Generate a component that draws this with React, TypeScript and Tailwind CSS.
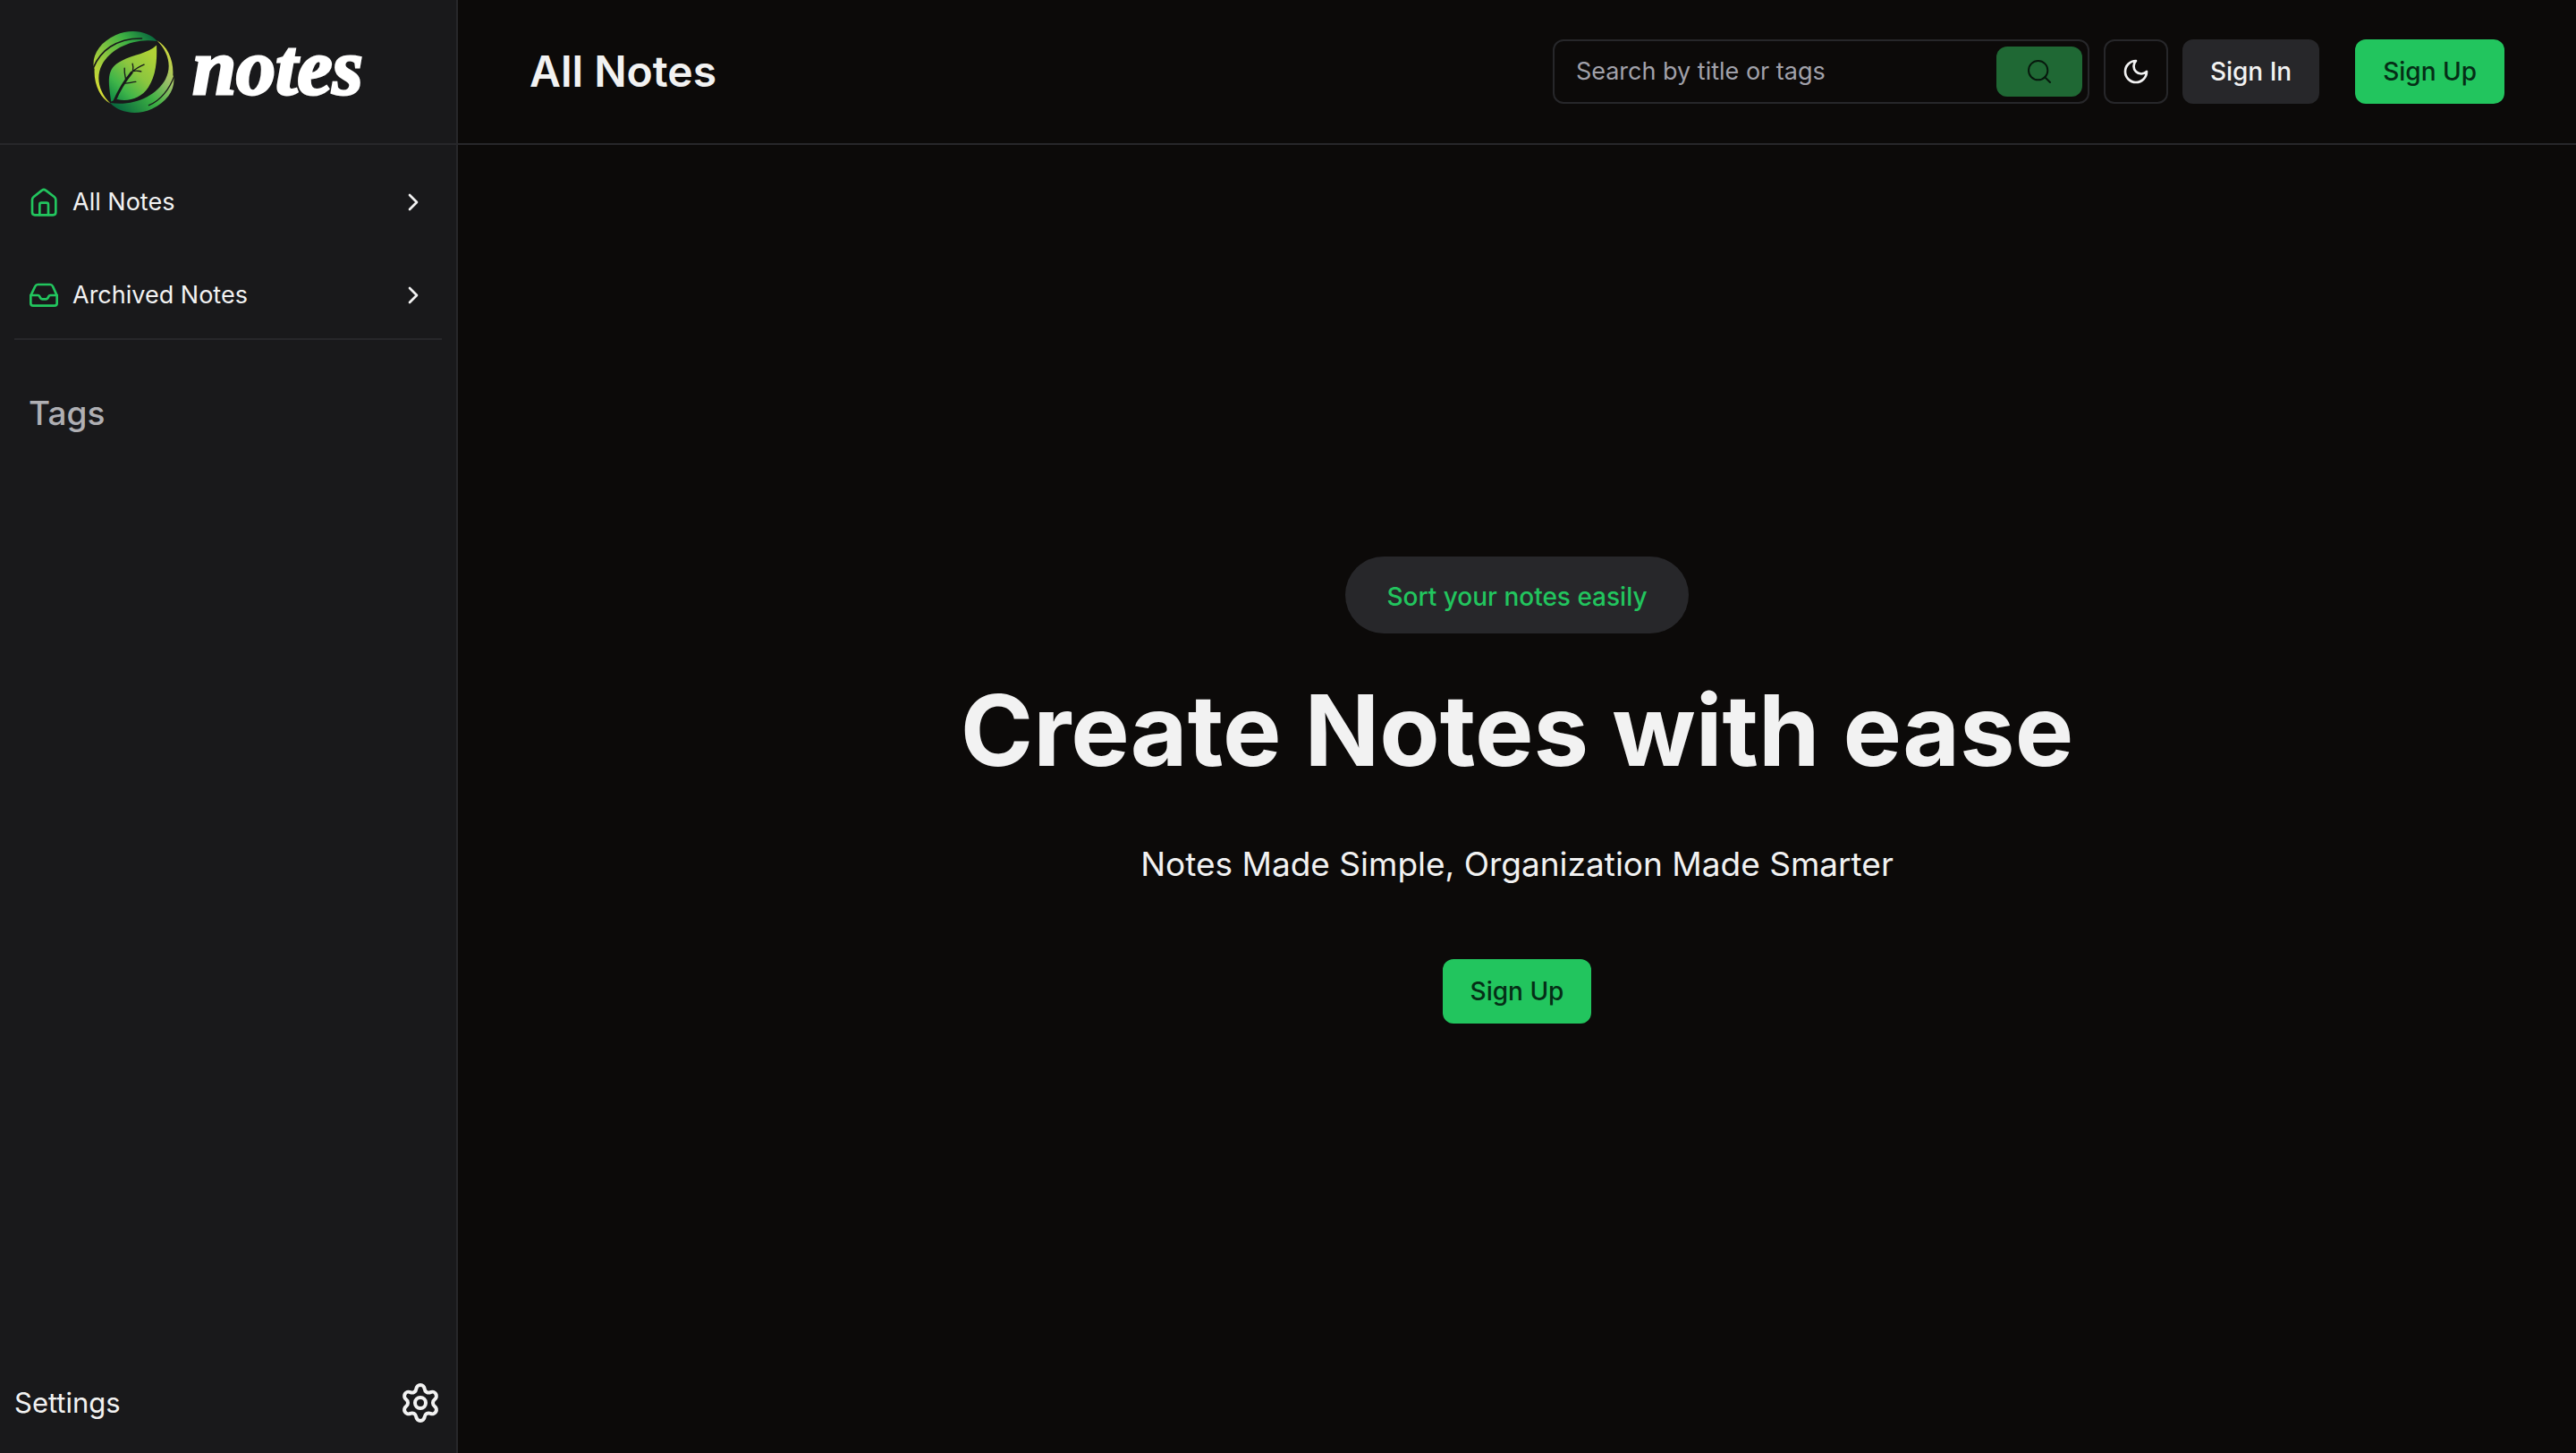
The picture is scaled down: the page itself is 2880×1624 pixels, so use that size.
import type { ReactNode } from "react";
import { ChevronRight, Search, Settings } from "lucide-react";

function LogoMark() {
  return (
    <svg viewBox="74 70 274 280" className="h-[93px] w-[91px]" aria-hidden="true">
      <defs>
        <linearGradient id="ring" x1="0.1" y1="0.85" x2="0.95" y2="0.1">
          <stop offset="0" stopColor="#d5dc35" />
          <stop offset="0.35" stopColor="#8cc63f" />
          <stop offset="0.7" stopColor="#3cb043" />
          <stop offset="1" stopColor="#0b6b3e" />
        </linearGradient>
        <linearGradient id="ringLower" x1="0.05" y1="0.9" x2="0.9" y2="0.1">
          <stop offset="0" stopColor="#d5dc35" />
          <stop offset="0.3" stopColor="#9cc069" />
          <stop offset="0.6" stopColor="#3cb043" />
          <stop offset="1" stopColor="#0b6b3e" />
        </linearGradient>
        <linearGradient id="leaf" x1="0.85" y1="0.1" x2="0.1" y2="1">
          <stop offset="0" stopColor="#b0d236" />
          <stop offset="0.4" stopColor="#8cc63f" />
          <stop offset="0.75" stopColor="#3fb549" />
          <stop offset="1" stopColor="#128a43" />
        </linearGradient>
      </defs>
      <g>
        <path
          fill="url(#ring)"
          d="M290 106C262 74 204 62 150 86C98 110 72 150 76 192L79 200C76 250 98 298 133 316C94 278 82 228 104 186C134 130 210 94 290 106Z"
        />
        <path fill="none" stroke="#19191b" strokeWidth="5" strokeLinecap="round" d="M75 196C98 140 150 96 238 97" />
      </g>
      <g transform="rotate(180 211 210)">
        <path
          fill="url(#ringLower)"
          d="M290 106C262 74 204 62 150 86C98 110 72 150 76 192L79 200C76 250 98 298 133 316C94 278 82 228 104 186C134 130 210 94 290 106Z"
        />
        <path fill="none" stroke="#19191b" strokeWidth="4" strokeLinecap="round" d="M75 196C90 154 120 114 160 98" />
      </g>
      <path
        fill="url(#leaf)"
        d="M288 120C258 148 210 152 170 172C116 198 126 240 135 309L155 302C194 310 234 300 260 262C286 222 290 174 288 120Z"
      />
      <g fill="none" stroke="#19191b" strokeLinecap="round">
        <path strokeWidth="9" d="M146 308C158 280 176 246 204 212" />
        <path strokeWidth="4" d="M200 214C214 202 228 192 246 185" />
        <path strokeWidth="4" d="M208 206C210 198 210 192 207 182M184 234C182 222 179 212 180 197M210 207C220 204 228 207 236 208M182 248C194 248 204 244 218 243" />
      </g>
    </svg>
  );
}

function HomeIcon() {
  return (
    <svg viewBox="99 88 96 96" className="size-8" fill="none" stroke="#22c55e" strokeWidth="8" strokeLinecap="round" strokeLinejoin="round" aria-hidden="true">
      <path d="M108 128Q108 122 113 118L141 96Q147 91 153 96L182 118Q187 122 187 128V170Q187 179 178 179H117Q108 179 108 170Z" />
      <path d="M133 178V144Q133 138 139 138H156Q162 138 162 144V178" />
    </svg>
  );
}

function ArchiveIcon() {
  return (
    <svg viewBox="99 402 96 96" className="size-8" fill="none" stroke="#22c55e" strokeWidth="8" strokeLinecap="round" strokeLinejoin="round" aria-hidden="true">
      <path d="M103 451L118 420Q121 414 127 414H168Q174 414 177 420L191 451V477Q191 485 183 485H111Q103 485 103 477Z" />
      <path d="M103 450H127Q131 450 133 454L136 460Q138 463 142 463H154Q158 463 160 460L163 454Q165 450 169 450H191" />
    </svg>
  );
}

function MoonIcon() {
  return (
    <svg viewBox="0 0 24 24" className="size-8" fill="none" stroke="currentColor" strokeWidth="2" strokeLinecap="round" strokeLinejoin="round" aria-hidden="true">
      <path d="M12 3a6 6 0 0 0 9 9 9 9 0 1 1-9-9Z" />
    </svg>
  );
}

function NavLink({ icon, label }: { icon: ReactNode; label: string }) {
  return (
    <a href="#" className="flex h-20 items-center gap-4 rounded-xl pl-[17px] pr-4 text-[27px] leading-10">
      {icon}
      <span className="grow">{label}</span>
      <ChevronRight className="size-8" strokeWidth={2} />
    </a>
  );
}

function SignUp() {
  return (
    <button className="h-[72px] rounded-xl bg-[#22c55e] px-[31px] text-[28px] font-medium leading-10 text-[#052e16]">
      Sign Up
    </button>
  );
}

export default function App() {
  return (
    <div className="flex min-h-screen bg-[#0c0a09] font-['Inter',sans-serif] text-[#f2f2f2]">
      <aside className="flex w-[512px] shrink-0 flex-col border-r-2 border-[#27272a] bg-[#19191b]">
        <div className="flex h-[162px] items-center justify-center gap-5 border-b-2 border-[#27272a]">
          <LogoMark />
          <span className="pb-2 font-['Liberation_Serif',serif] text-[88px] font-bold italic leading-none text-white [-webkit-text-stroke:3px_white]">
            notes
          </span>
        </div>
        <nav className="mx-4 flex flex-col gap-6 border-b-2 border-[#27272a] pb-2 pt-6">
          <NavLink icon={<HomeIcon />} label="All Notes" />
          <NavLink icon={<ArchiveIcon />} label="Archived Notes" />
        </nav>
        <h2 className="mt-14 px-8 text-[37px] font-medium leading-[52px] text-[#afafb3]">Tags</h2>
        <div className="mt-auto flex h-28 items-center justify-between px-4">
          <span className="text-[31px] leading-10">Settings</span>
          <button aria-label="Open settings">
            <Settings className="size-12" strokeWidth={2} />
          </button>
        </div>
      </aside>
      <div className="flex grow flex-col">
        <header className="flex h-[162px] items-center justify-between border-b-2 border-[#27272a] px-20">
          <h1 className="text-[48px] font-semibold leading-none">All Notes</h1>
          <div className="flex items-center gap-4">
            <form className="flex h-[72px] w-[600px] items-center rounded-xl border-2 border-[#27272a] pl-6 pr-1.5">
              <input
                type="text"
                aria-label="Search by title or tags"
                placeholder="Search by title or tags"
                className="min-w-0 grow bg-transparent text-[27px] leading-10 outline-none placeholder:text-[#a1a1aa]"
              />
              <button type="button" aria-label="Search" className="flex h-14 w-24 items-center justify-center rounded-xl bg-[#1f6834] text-[#07190d]">
                <Search className="size-8" strokeWidth={1.5} />
              </button>
            </form>
            <button aria-label="Toggle theme" className="flex size-[72px] items-center justify-center rounded-xl border-2 border-[#27272a]">
              <MoonIcon />
            </button>
            <button className="mr-6 h-[72px] rounded-xl bg-[#27272a] px-[31px] text-[28px] font-medium leading-10">
              Sign In
            </button>
            <SignUp />
          </div>
        </header>
        <main className="flex grow flex-col items-center justify-center pb-5">
          <p className="rounded-full bg-[#27272a] px-[46px] pb-5 pt-6 text-[28px] font-medium leading-[42px] text-[#22c55e]">
            Sort your notes easily
          </p>
          <h2 className="mt-12 text-[110px] font-bold leading-[120px]">Create Notes with ease</h2>
          <p className="mt-16 text-[37px] leading-[52px]">Notes Made Simple, Organization Made Smarter</p>
          <div className="mt-20 flex">
            <SignUp />
          </div>
        </main>
      </div>
    </div>
  );
}
